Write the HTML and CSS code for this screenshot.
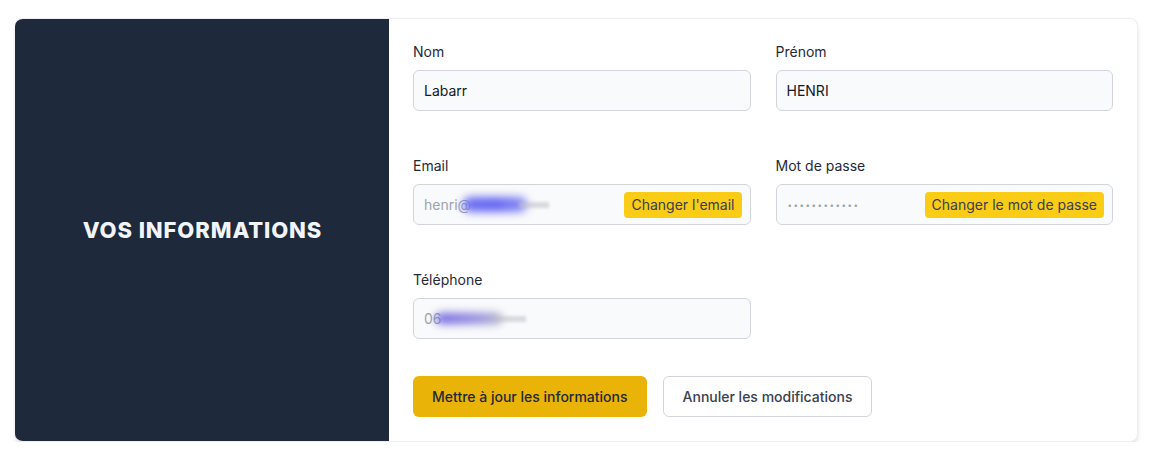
FILE: index.html
```html
<!DOCTYPE html>
<html lang="fr">
<head>
<meta charset="utf-8">
<link rel="stylesheet" href="styles.css">
</head>
<body>
<div class="page">
  <section class="card">
    <aside class="side">
      <h1 class="side-title">VOS INFORMATIONS</h1>
    </aside>
    <form class="form">
      <div class="grid">
        <div class="field">
          <label class="label">Nom</label>
          <div class="input"><span class="value">Labarr</span></div>
        </div>
        <div class="field">
          <label class="label">Prénom</label>
          <div class="input"><span class="value">HENRI</span></div>
        </div>
        <div class="field">
          <label class="label">Email</label>
          <div class="input input-action">
            <span class="value muted">henri@<span class="blur blur-email"></span><span class="blur-tail"></span></span>
            <button type="button" class="mini-btn">Changer l'email</button>
          </div>
        </div>
        <div class="field">
          <label class="label">Mot de passe</label>
          <div class="input input-action">
            <span class="value dots">••••••••••••</span>
            <button type="button" class="mini-btn">Changer le mot de passe</button>
          </div>
        </div>
        <div class="field">
          <label class="label">Téléphone</label>
          <div class="input"><span class="value muted">06<span class="blur blur-phone"></span><span class="blur-tail short"></span></span></div>
        </div>
      </div>
      <div class="actions">
        <button type="button" class="btn btn-primary">Mettre à jour les informations</button>
        <button type="button" class="btn btn-secondary">Annuler les modifications</button>
      </div>
    </form>
  </section>
</div>
</body>
</html>
```

FILE: styles.css
```css
* { box-sizing: border-box; }
html, body { margin: 0; padding: 0; background: #ffffff; }
body {
  font-family: Inter, "Noto Sans", "Liberation Sans", sans-serif;
  color: #111827;
}
.page {
  padding: 18px 13px 0 15px;
}
.card {
  display: grid;
  grid-template-columns: 374px 1fr;
  height: 424px;
  border-radius: 8px;
  background: #ffffff;
  box-shadow: 0 4px 6px -1px rgba(0,0,0,0.10), 0 2px 4px -2px rgba(0,0,0,0.10);
  overflow: hidden;
  border: 1px solid #eceef2;
  border-left: none;
}
.side {
  background: #1e293b;
  display: flex;
  align-items: center;
  justify-content: center;
}
.side-title {
  margin: 0 0 0 1px;
  color: #f1f5f9;
  font-size: 22px;
  font-weight: 800;
  letter-spacing: 0.9px;
}
.form {
  padding: 23px 24px 23px 24px;
  display: flex;
  flex-direction: column;
}
.grid {
  display: grid;
  grid-template-columns: 1fr 1fr;
  column-gap: 25px;
  row-gap: 45px;
}
.field {
  display: flex;
  flex-direction: column;
}
.label {
  font-size: 14px;
  line-height: 20px;
  color: #1f2937;
  margin-bottom: 8px;
}
.input {
  height: 41px;
  border: 1px solid #d1d5db;
  border-radius: 6px;
  background: #f9fafb;
  display: flex;
  align-items: center;
  padding: 0 10px;
  font-size: 14px;
}
.input-action {
  justify-content: space-between;
  padding-right: 8px;
}
.value {
  color: #111827;
  display: flex;
  align-items: center;
}
.muted { color: #9ca3af; }
.dots {
  color: #9ca3af;
  font-size: 8px;
  letter-spacing: 1.5px;
  padding-left: 1px;
}
.blur {
  display: inline-block;
  border-radius: 8px;
  filter: blur(4px);
}
.blur-email {
  width: 64px;
  height: 15px;
  margin-left: -8px;
  background: linear-gradient(90deg, #6d6ff0 0%, #6366f1 50%, #8b8df3 100%);
}
.blur-tail {
  display: inline-block;
  width: 30px;
  height: 6px;
  margin-left: -8px;
  background: rgba(190,192,200,0.55);
  filter: blur(1.5px);
}
.blur-tail.short { width: 32px; }
.blur-phone {
  width: 66px;
  height: 11px;
  margin-left: -6px;
  background: linear-gradient(90deg, #6d62e0 0%, #8f89dd 60%, #b0aec9 100%);
}
.mini-btn {
  font-family: inherit;
  font-size: 14px;
  color: #374151;
  background: #facc15;
  border: none;
  border-radius: 4px;
  height: 26px;
  padding: 0 7px;
  cursor: pointer;
}
.actions {
  display: flex;
  gap: 16px;
  margin-top: 37px;
}
.btn {
  font-family: inherit;
  font-size: 14px;
  font-weight: 500;
  height: 41px;
  border-radius: 6px;
  padding: 0 19px;
  cursor: pointer;
}
.btn-primary {
  background: #eab308;
  border: none;
  color: #1f2937;
}
.btn-secondary {
  background: #ffffff;
  border: 1px solid #d1d5db;
  color: #374151;
}
```
